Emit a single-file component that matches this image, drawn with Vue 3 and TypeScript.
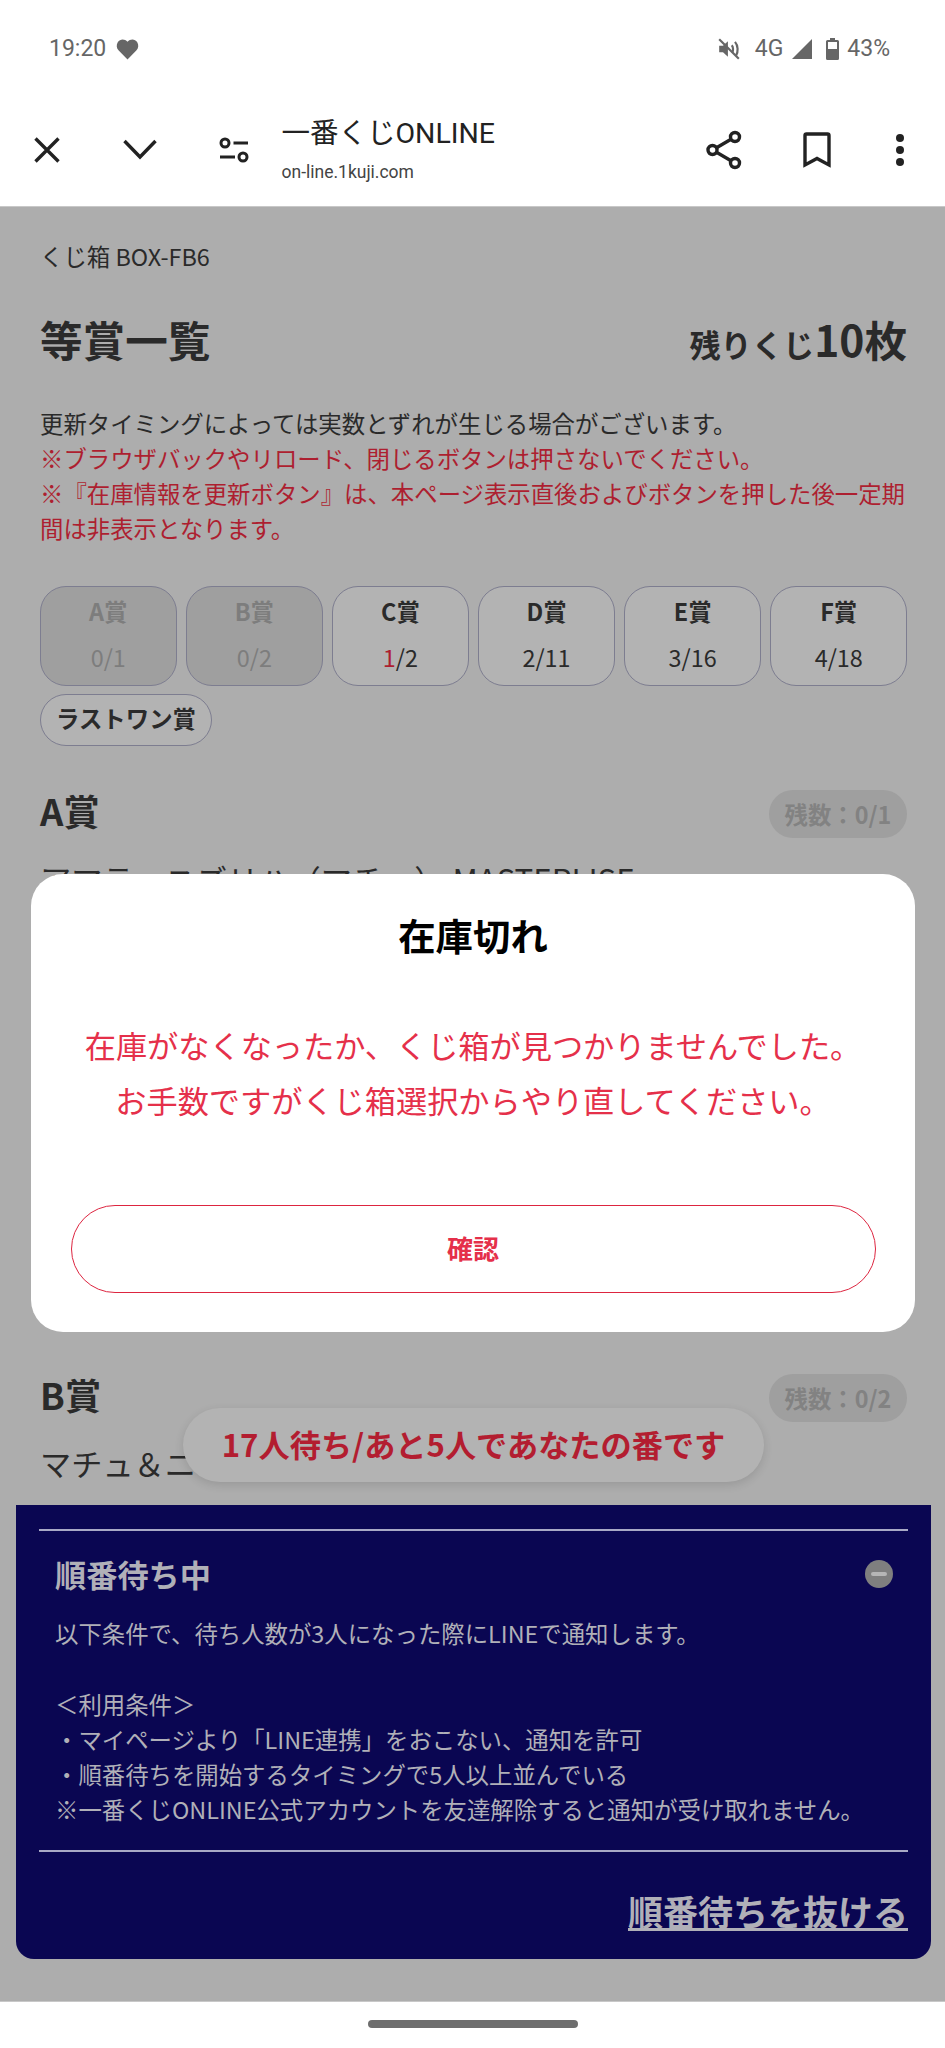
<script setup lang="ts">
interface Prize {
  label: string
  left: number
  total: number
  soldOut?: boolean
}

const prizes: Prize[] = [
  { label: 'A賞', left: 0, total: 1, soldOut: true },
  { label: 'B賞', left: 0, total: 2, soldOut: true },
  { label: 'C賞', left: 1, total: 2 },
  { label: 'D賞', left: 2, total: 11 },
  { label: 'E賞', left: 3, total: 16 },
  { label: 'F賞', left: 4, total: 18 },
]

const conditions = [
  '＜利用条件＞',
  '・マイページより「LINE連携」をおこない、通知を許可',
  '・順番待ちを開始するタイミングで5人以上並んでいる',
  '※一番くじONLINE公式アカウントを友達解除すると通知が受け取れません。',
]
</script>

<template>
  <div class="screen">
    <div class="status-bar">
      <div class="status-left">
        <span>19:20</span>
        <svg width="23" height="22" viewBox="0 0 22 21"><path d="M11 20.5 2.6 12C.4 9.700.1 6.300 1.800 3.700 3.800.8 8.200.3 11 3.600 13.800.3 18.200.8 20.200 3.700c1.700 2.600 1.400 6-.8 8.300z" fill="#666" /></svg>
      </div>
      <div class="status-right">
        <svg class="mute" width="24" height="24" viewBox="0 0 22 22" fill="none" stroke="#666" stroke-width="2">
          <path d="M2 8h3.500L10 4v14l-4.500-4H2z" fill="#666" stroke="none" />
          <path d="M13.500 7.500c1.500 1.500 1.500 5 .5 7M16.500 4.500c3 3.500 3 9 1 12.500" />
          <path d="M2 2l18 18" />
        </svg>
        <span class="net">4G</span>
        <svg class="signal" width="20" height="20" viewBox="0 0 20 20"><path d="M20 0v20H0z" fill="#666" /></svg>
        <svg class="battery" width="13" height="22" viewBox="0 0 13 22">
          <path d="M4 0h5v2h2.500A1.500 1.500 0 0 1 13 3.500v17a1.500 1.500 0 0 1-1.500 1.500h-10A1.500 1.500 0 0 1 0 20.500v-17A1.500 1.500 0 0 1 1.500 2H4z" fill="#666" />
          <rect x="2" y="4" width="9" height="7" fill="#fff" />
        </svg>
        <span>43%</span>
      </div>
    </div>

    <header class="toolbar">
      <button class="tool">
        <svg width="28" height="28" viewBox="0 0 28 28" fill="none" stroke="#222" stroke-width="3.400"><path d="M2.500 2.500l23 23M25.500 2.500l-23 23" /></svg>
      </button>
      <button class="tool">
        <svg width="34" height="22" viewBox="0 0 34 22" fill="none" stroke="#222" stroke-width="3.400"><path d="M1.500 2l15.500 16L32.500 2" /></svg>
      </button>
      <button class="tool">
        <svg width="30" height="26" viewBox="0 0 30 26" fill="none" stroke="#222" stroke-width="3">
          <circle cx="6" cy="6" r="4" />
          <path d="M14.500 6H29M1 20h15" />
          <circle cx="24" cy="20" r="4" />
        </svg>
      </button>
      <div class="page-title">
        <div class="site-name">一番くじONLINE</div>
        <div class="site-url">on-line.1kuji.com</div>
      </div>
      <button class="tool">
        <svg width="36" height="40" viewBox="0 0 36 40" fill="none" stroke="#222" stroke-width="3.400">
          <circle cx="29" cy="7" r="4.500" />
          <circle cx="6.500" cy="20" r="4.500" />
          <circle cx="29" cy="33" r="4.500" />
          <path d="M10.500 17.700 25 9.300M10.500 22.300 25 30.700" />
        </svg>
      </button>
      <button class="tool">
        <svg width="28" height="36" viewBox="0 0 28 36" fill="none" stroke="#222" stroke-width="3.400"><path d="M2 33V3.500A1.500 1.500 0 0 1 3.500 2h21A1.500 1.500 0 0 1 26 3.500V33l-12-6.500z" /></svg>
      </button>
      <button class="tool more">
        <svg width="10" height="34" viewBox="0 0 10 34" fill="#222">
          <circle cx="5" cy="5" r="4" />
          <circle cx="5" cy="17" r="4" />
          <circle cx="5" cy="29" r="4" />
        </svg>
      </button>
    </header>

    <main class="page">
      <div class="content">
        <p class="crumb">くじ箱 BOX-FB6</p>
        <div class="title-row">
          <h1>等賞一覧</h1>
          <div class="remaining"><small>残りくじ</small>10枚</div>
        </div>
        <div class="notes">
          <p>更新タイミングによっては実数とずれが生じる場合がございます。</p>
          <p class="warn">※ブラウザバックやリロード、閉じるボタンは押さないでください。</p>
          <p class="warn">※『在庫情報を更新ボタン』は、本ページ表示直後およびボタンを押した後一定期間は非表示となります。</p>
        </div>

        <div class="tabs">
          <div v-for="p in prizes" :key="p.label" class="tab" :class="{ out: p.soldOut }">
            <b>{{ p.label }}</b>
            <span><em v-if="p.label === 'C賞'">{{ p.left }}</em><template v-else>{{ p.left }}</template>/{{ p.total }}</span>
          </div>
        </div>
        <div class="last-one">ラストワン賞</div>

        <section class="prize prize-a">
          <div class="prize-head">
            <h2>A賞</h2>
            <span class="stock">残数：0/1</span>
          </div>
          <p class="prize-name">アマテ・ユズリハ（マチュ） MASTERLISE</p>
        </section>

        <section class="prize prize-b">
          <div class="prize-head">
            <h2>B賞</h2>
            <span class="stock">残数：0/2</span>
          </div>
          <p class="prize-name">マチュ＆ニャアン</p>
        </section>
      </div>

      <div class="modal">
        <h3>在庫切れ</h3>
        <p>在庫がなくなったか、くじ箱が見つかりませんでした。<br>お手数ですがくじ箱選択からやり直してください。</p>
        <button class="confirm">確認</button>
      </div>

      <div class="toast">17人待ち/あと5人であなたの番です</div>

      <aside class="queue">
        <div class="queue-body">
          <div class="queue-head">
            <h4>順番待ち中</h4>
            <svg width="28" height="28" viewBox="0 0 28 28">
              <circle cx="14" cy="14" r="14" fill="#7f7f7f" />
              <rect x="6" y="12" width="16" height="4" rx="2" fill="#b6b6b6" />
            </svg>
          </div>
          <p class="queue-lead">以下条件で、待ち人数が3人になった際にLINEで通知します。</p>
          <p v-for="line in conditions" :key="line">{{ line }}</p>
        </div>
        <div class="queue-foot">
          <a>順番待ちを抜ける</a>
        </div>
      </aside>
    </main>

    <footer class="nav-bar"><span /></footer>
  </div>
</template>

<style>
html,
body {
  margin: 0;
  background: #fff;
}
</style>

<style scoped>
.screen {
  width: 945px;
  height: 2048px;
  display: flex;
  flex-direction: column;
  overflow: hidden;
  background: #fff;
  font-family: "Noto Sans CJK JP", "Noto Sans", sans-serif;
}
p,
h1,
h2,
h3,
h4 {
  margin: 0;
}

.status-bar {
  height: 85px;
  padding: 12px 55px 0 49px;
  box-sizing: border-box;
  display: flex;
  justify-content: space-between;
  align-items: center;
  font: 23px Roboto, sans-serif;
  color: #666;
}
.status-left,
.status-right {
  display: flex;
  align-items: center;
}
.status-left svg {
  margin-left: 10px;
}
.net {
  margin-left: 14px;
}
.signal {
  margin-left: 9px;
}
.battery {
  margin-left: 14px;
  margin-right: 8px;
}

.toolbar {
  height: 121px;
  box-sizing: border-box;
  display: flex;
  align-items: center;
  padding: 9px 9px 0 0;
}
.tool {
  width: 93.500px;
  height: 100%;
  padding: 0;
  border: 0;
  background: none;
  display: flex;
  align-items: center;
  justify-content: center;
}
.tool.more {
  width: 72px;
}
.page-title {
  flex: 1;
  margin-left: 1px;
  color: #222;
  font-family: Roboto, "Noto Sans CJK JP", sans-serif;
}
.site-name {
  font-size: 28.500px;
  line-height: 36px;
  font-weight: 400;
  margin-top: 0;
}
.site-url {
  font-size: 17.500px;
  line-height: 24px;
  margin-top: 8px;
  color: #444;
}

.page {
  flex: 1;
  position: relative;
  overflow: hidden;
  background: #adadad;
  border-top: 1px solid #c8c8c8;
  border-bottom: 1px solid #c8c8c8;
  box-sizing: border-box;
}
.content {
  padding: 33px 38px 0 40px;
  color: #2a2a2a;
}
.crumb {
  font-size: 23.400px;
  line-height: 32px;
}
.title-row {
  margin-top: 37px;
  display: flex;
  justify-content: space-between;
  align-items: baseline;
  line-height: 60px;
}
h1 {
  font-size: 42.600px;
  font-weight: 700;
}
.remaining {
  font-size: 42.600px;
  font-weight: 700;
}
.remaining small {
  font-size: 31.200px;
}
.notes {
  margin-top: 32px;
  font-size: 23.400px;
  line-height: 35px;
}
.warn {
  color: #ad1f30;
}

.tabs {
  margin-top: 40px;
  display: grid;
  grid-template-columns: repeat(6, 1fr);
  gap: 9.600px;
}
.tab {
  height: 100px;
  box-sizing: border-box;
  border: 1.500px solid #7d7d90;
  border-radius: 26px;
  background: #b3b3b3;
  display: flex;
  flex-direction: column;
  align-items: center;
  font-size: 23.400px;
  padding-top: 7px;
  line-height: 34px;
}
.tab span {
  margin-top: 12px;
}
.tab em {
  font-style: normal;
  color: #ad1f30;
}
.tab.out {
  background: #9f9f9f;
  color: #7d7d7d;
}
.last-one {
  margin-top: 8px;
  width: 172px;
  height: 52px;
  box-sizing: border-box;
  border: 1.500px solid #7d7d90;
  border-radius: 26px;
  background: #b3b3b3;
  font-size: 23.400px;
  font-weight: 700;
  line-height: 47px;
  text-align: center;
}

.prize-head {
  display: flex;
  justify-content: space-between;
  align-items: center;
  height: 48px;
}
.prize-a {
  margin-top: 44px;
}
.prize-b {
  margin-top: 475px;
}
h2 {
  font-size: 36.400px;
  font-weight: 700;
  padding-bottom: 9px;
}
.stock {
  width: 138px;
  height: 48px;
  border-radius: 24px;
  background: #9f9f9f;
  color: #828282;
  font-size: 23.400px;
  font-weight: 700;
  line-height: 48px;
  text-align: center;
}
.prize-name {
  margin-top: 21px;
  font-size: 31.200px;
  line-height: 40px;
}

.modal {
  position: absolute;
  left: 31px;
  top: 667px;
  width: 884px;
  height: 458px;
  box-sizing: border-box;
  padding-top: 36px;
  border-radius: 32px;
  background: #fff;
  text-align: center;
}
.modal h3 {
  font-size: 37.400px;
  line-height: 50px;
  font-weight: 700;
  color: #000;
}
.modal p {
  margin-top: 57px;
  font-size: 31.200px;
  line-height: 55px;
  color: #e5304a;
}
.confirm {
  display: block;
  margin: 78px auto 0;
  width: 805px;
  height: 88px;
  padding: 0 0 4px;
  border: 1.500px solid #dd2540;
  border-radius: 44px;
  background: #fff;
  color: #e5304a;
  font-family: inherit;
  font-size: 26px;
  font-weight: 700;
}

.toast {
  position: absolute;
  left: 183px;
  top: 1201px;
  width: 581px;
  height: 74px;
  border-radius: 37px;
  background: #b3b3b3;
  box-shadow: 0 3px 10px rgba(0, 0, 0, 0.12);
  color: #b31d30;
  font-size: 31.200px;
  font-weight: 700;
  line-height: 72px;
  text-align: center;
}

.queue {
  position: absolute;
  left: 16px;
  right: 14px;
  top: 1298px;
  height: 454px;
  box-sizing: border-box;
  padding: 24px 23px 0;
  background: #0a0652;
  border-radius: 0 0 18px 18px;
  color: #b0b0b8;
  font-size: 23.400px;
  line-height: 35px;
}
.queue-body {
  border-top: 2px solid #a9a9c6;
  border-bottom: 2px solid #a9a9c6;
  padding: 0 16px 0;
  height: 323px;
  box-sizing: border-box;
}
.queue-head {
  display: flex;
  justify-content: space-between;
  align-items: center;
  height: 85px;
}
.queue-head svg {
  margin-right: -1px;
}
h4 {
  font-size: 31.200px;
  font-weight: 700;
}
.queue-lead {
  margin-bottom: 36px;
}
.queue-foot {
  display: flex;
  justify-content: flex-end;
  margin-top: 34px;
}
.queue-foot a {
  font-size: 35px;
  line-height: 50px;
  font-weight: 700;
  text-decoration: underline;
}

.nav-bar {
  height: 46px;
  display: flex;
  justify-content: center;
  padding-top: 18px;
  box-sizing: border-box;
}
.nav-bar span {
  width: 210px;
  height: 8px;
  border-radius: 4px;
  background: #6e6e6e;
}
</style>
